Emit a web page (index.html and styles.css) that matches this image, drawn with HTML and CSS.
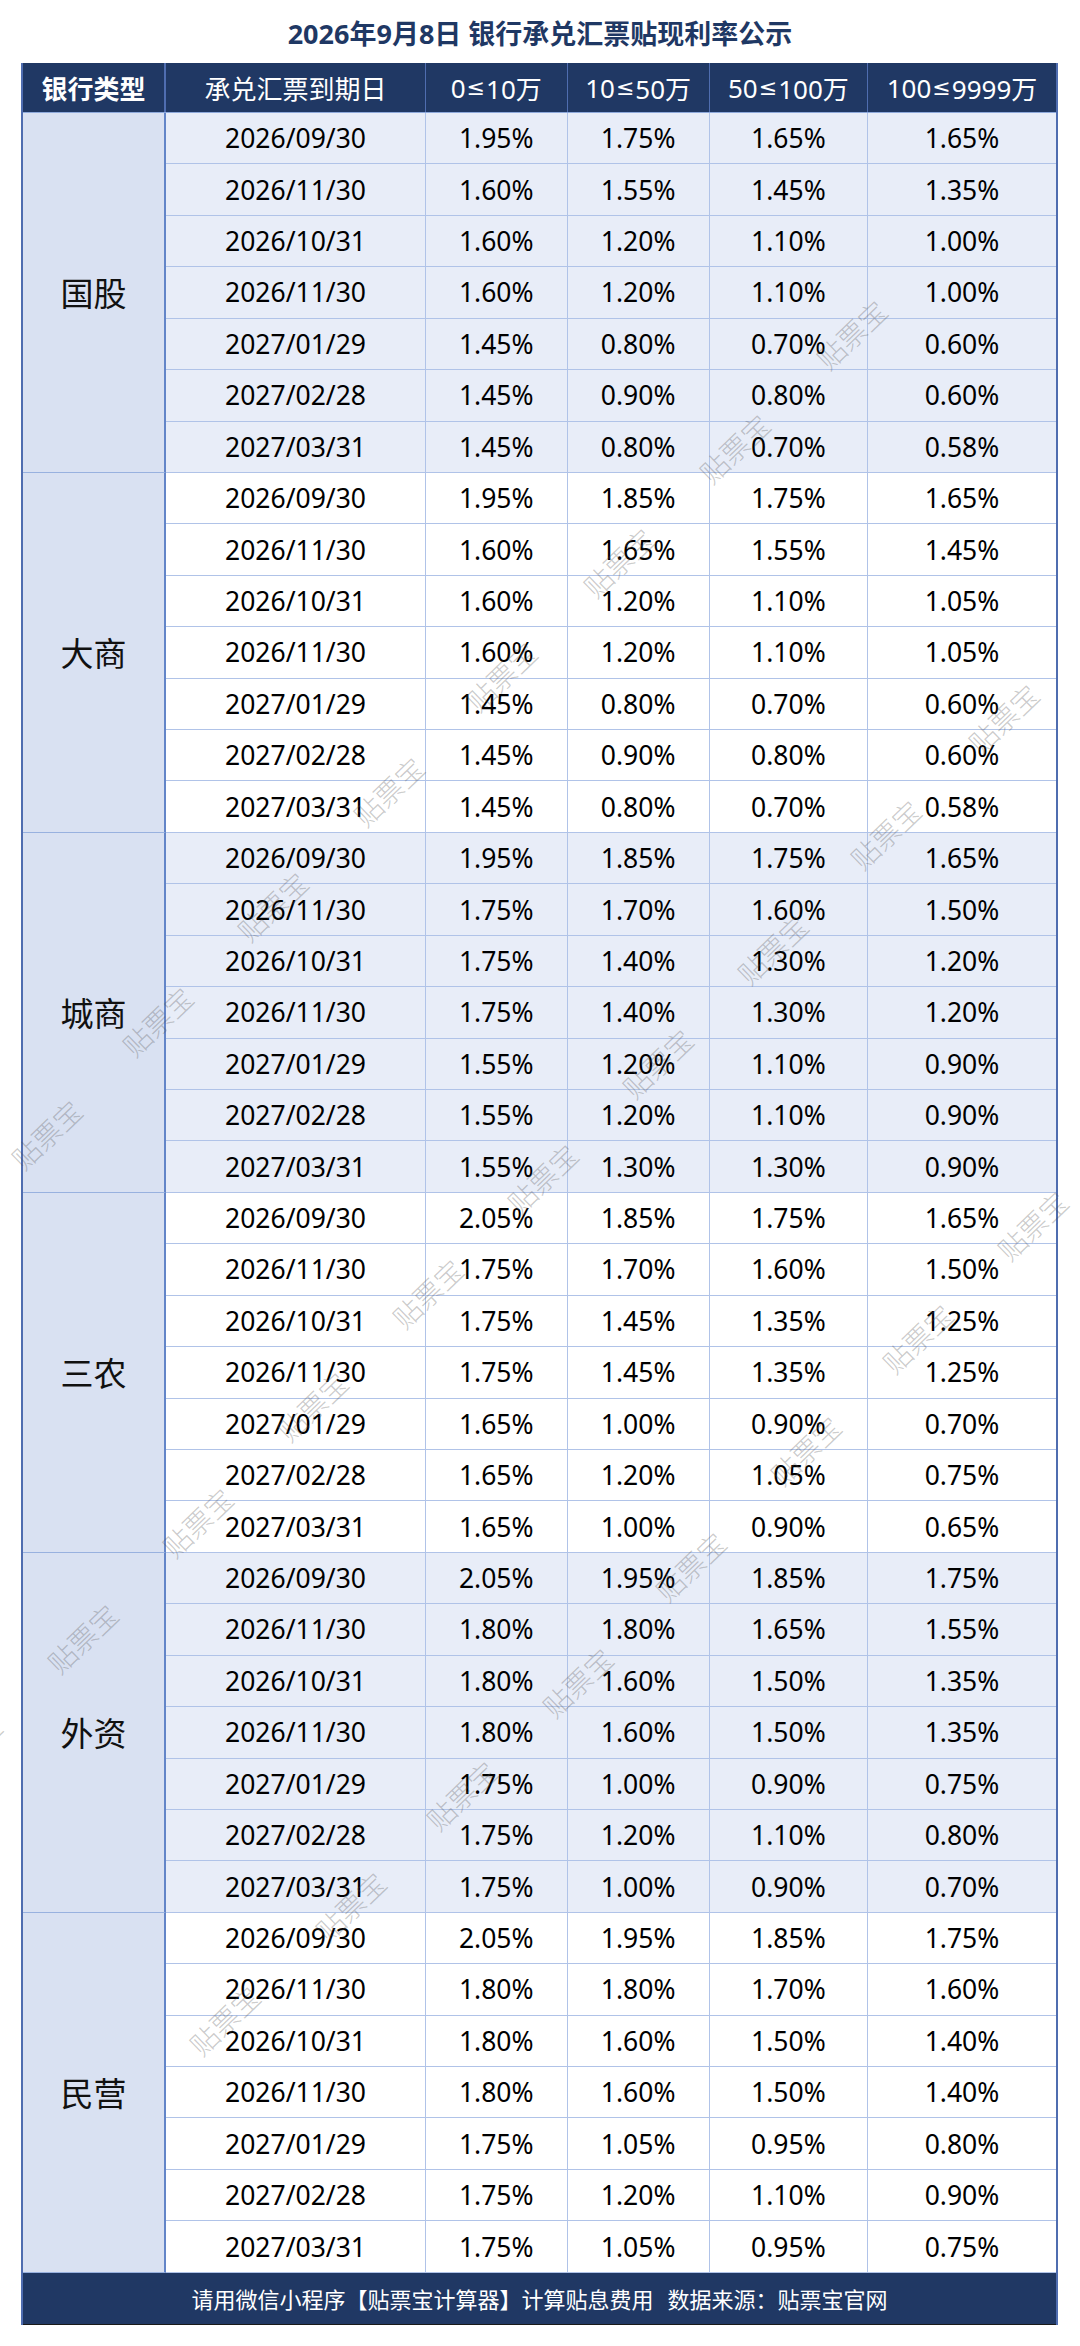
FILE: index.html
```html
<!DOCTYPE html>
<html lang="zh-CN">
<head>
<meta charset="utf-8">
<title>银行承兑汇票贴现利率公示</title>
<link rel="stylesheet" href="styles.css">
</head>
<body>
<div class="page">
  <h1 class="title">2026年9月8日 银行承兑汇票贴现利率公示</h1>
  <div class="sheet">
    <div class="head">
      <div class="h h-bold">银行类型</div>
      <div class="h">承兑汇票到期日</div>
      <div class="h">0<span class="le">≤</span>10万</div>
      <div class="h">10<span class="le">≤</span>50万</div>
      <div class="h">50<span class="le">≤</span>100万</div>
      <div class="h">100<span class="le">≤</span>9999万</div>
    </div>

    <div class="group alt">
      <div class="label">国股</div>
      <div class="v">2026/09/30</div><div class="v">1.95%</div><div class="v">1.75%</div><div class="v">1.65%</div><div class="v">1.65%</div>
      <div class="v">2026/11/30</div><div class="v">1.60%</div><div class="v">1.55%</div><div class="v">1.45%</div><div class="v">1.35%</div>
      <div class="v">2026/10/31</div><div class="v">1.60%</div><div class="v">1.20%</div><div class="v">1.10%</div><div class="v">1.00%</div>
      <div class="v">2026/11/30</div><div class="v">1.60%</div><div class="v">1.20%</div><div class="v">1.10%</div><div class="v">1.00%</div>
      <div class="v">2027/01/29</div><div class="v">1.45%</div><div class="v">0.80%</div><div class="v">0.70%</div><div class="v">0.60%</div>
      <div class="v">2027/02/28</div><div class="v">1.45%</div><div class="v">0.90%</div><div class="v">0.80%</div><div class="v">0.60%</div>
      <div class="v">2027/03/31</div><div class="v">1.45%</div><div class="v">0.80%</div><div class="v">0.70%</div><div class="v">0.58%</div>
    </div>

    <div class="group">
      <div class="label">大商</div>
      <div class="v">2026/09/30</div><div class="v">1.95%</div><div class="v">1.85%</div><div class="v">1.75%</div><div class="v">1.65%</div>
      <div class="v">2026/11/30</div><div class="v">1.60%</div><div class="v">1.65%</div><div class="v">1.55%</div><div class="v">1.45%</div>
      <div class="v">2026/10/31</div><div class="v">1.60%</div><div class="v">1.20%</div><div class="v">1.10%</div><div class="v">1.05%</div>
      <div class="v">2026/11/30</div><div class="v">1.60%</div><div class="v">1.20%</div><div class="v">1.10%</div><div class="v">1.05%</div>
      <div class="v">2027/01/29</div><div class="v">1.45%</div><div class="v">0.80%</div><div class="v">0.70%</div><div class="v">0.60%</div>
      <div class="v">2027/02/28</div><div class="v">1.45%</div><div class="v">0.90%</div><div class="v">0.80%</div><div class="v">0.60%</div>
      <div class="v">2027/03/31</div><div class="v">1.45%</div><div class="v">0.80%</div><div class="v">0.70%</div><div class="v">0.58%</div>
    </div>

    <div class="group alt">
      <div class="label">城商</div>
      <div class="v">2026/09/30</div><div class="v">1.95%</div><div class="v">1.85%</div><div class="v">1.75%</div><div class="v">1.65%</div>
      <div class="v">2026/11/30</div><div class="v">1.75%</div><div class="v">1.70%</div><div class="v">1.60%</div><div class="v">1.50%</div>
      <div class="v">2026/10/31</div><div class="v">1.75%</div><div class="v">1.40%</div><div class="v">1.30%</div><div class="v">1.20%</div>
      <div class="v">2026/11/30</div><div class="v">1.75%</div><div class="v">1.40%</div><div class="v">1.30%</div><div class="v">1.20%</div>
      <div class="v">2027/01/29</div><div class="v">1.55%</div><div class="v">1.20%</div><div class="v">1.10%</div><div class="v">0.90%</div>
      <div class="v">2027/02/28</div><div class="v">1.55%</div><div class="v">1.20%</div><div class="v">1.10%</div><div class="v">0.90%</div>
      <div class="v">2027/03/31</div><div class="v">1.55%</div><div class="v">1.30%</div><div class="v">1.30%</div><div class="v">0.90%</div>
    </div>

    <div class="group">
      <div class="label">三农</div>
      <div class="v">2026/09/30</div><div class="v">2.05%</div><div class="v">1.85%</div><div class="v">1.75%</div><div class="v">1.65%</div>
      <div class="v">2026/11/30</div><div class="v">1.75%</div><div class="v">1.70%</div><div class="v">1.60%</div><div class="v">1.50%</div>
      <div class="v">2026/10/31</div><div class="v">1.75%</div><div class="v">1.45%</div><div class="v">1.35%</div><div class="v">1.25%</div>
      <div class="v">2026/11/30</div><div class="v">1.75%</div><div class="v">1.45%</div><div class="v">1.35%</div><div class="v">1.25%</div>
      <div class="v">2027/01/29</div><div class="v">1.65%</div><div class="v">1.00%</div><div class="v">0.90%</div><div class="v">0.70%</div>
      <div class="v">2027/02/28</div><div class="v">1.65%</div><div class="v">1.20%</div><div class="v">1.05%</div><div class="v">0.75%</div>
      <div class="v">2027/03/31</div><div class="v">1.65%</div><div class="v">1.00%</div><div class="v">0.90%</div><div class="v">0.65%</div>
    </div>

    <div class="group alt">
      <div class="label">外资</div>
      <div class="v">2026/09/30</div><div class="v">2.05%</div><div class="v">1.95%</div><div class="v">1.85%</div><div class="v">1.75%</div>
      <div class="v">2026/11/30</div><div class="v">1.80%</div><div class="v">1.80%</div><div class="v">1.65%</div><div class="v">1.55%</div>
      <div class="v">2026/10/31</div><div class="v">1.80%</div><div class="v">1.60%</div><div class="v">1.50%</div><div class="v">1.35%</div>
      <div class="v">2026/11/30</div><div class="v">1.80%</div><div class="v">1.60%</div><div class="v">1.50%</div><div class="v">1.35%</div>
      <div class="v">2027/01/29</div><div class="v">1.75%</div><div class="v">1.00%</div><div class="v">0.90%</div><div class="v">0.75%</div>
      <div class="v">2027/02/28</div><div class="v">1.75%</div><div class="v">1.20%</div><div class="v">1.10%</div><div class="v">0.80%</div>
      <div class="v">2027/03/31</div><div class="v">1.75%</div><div class="v">1.00%</div><div class="v">0.90%</div><div class="v">0.70%</div>
    </div>

    <div class="group">
      <div class="label">民营</div>
      <div class="v">2026/09/30</div><div class="v">2.05%</div><div class="v">1.95%</div><div class="v">1.85%</div><div class="v">1.75%</div>
      <div class="v">2026/11/30</div><div class="v">1.80%</div><div class="v">1.80%</div><div class="v">1.70%</div><div class="v">1.60%</div>
      <div class="v">2026/10/31</div><div class="v">1.80%</div><div class="v">1.60%</div><div class="v">1.50%</div><div class="v">1.40%</div>
      <div class="v">2026/11/30</div><div class="v">1.80%</div><div class="v">1.60%</div><div class="v">1.50%</div><div class="v">1.40%</div>
      <div class="v">2027/01/29</div><div class="v">1.75%</div><div class="v">1.05%</div><div class="v">0.95%</div><div class="v">0.80%</div>
      <div class="v">2027/02/28</div><div class="v">1.75%</div><div class="v">1.20%</div><div class="v">1.10%</div><div class="v">0.90%</div>
      <div class="v">2027/03/31</div><div class="v">1.75%</div><div class="v">1.05%</div><div class="v">0.95%</div><div class="v">0.75%</div>
    </div>

    <div class="foot">请用微信小程序【贴票宝计算器】计算贴息费用<span class="gap">数据来源：贴票宝官网</span></div>
  </div>

  <div class="wm-layer" aria-hidden="true">
    <span class="wm" style="left:851px;top:334px">贴票宝</span>
    <span class="wm" style="left:734px;top:448px">贴票宝</span>
    <span class="wm" style="left:618px;top:562px">贴票宝</span>
    <span class="wm" style="left:501px;top:676px">贴票宝</span>
    <span class="wm" style="left:388px;top:791px">贴票宝</span>
    <span class="wm" style="left:272px;top:906px">贴票宝</span>
    <span class="wm" style="left:157px;top:1021px">贴票宝</span>
    <span class="wm" style="left:46px;top:1134px">贴票宝</span>

    <span class="wm" style="left:1003px;top:718px">贴票宝</span>
    <span class="wm" style="left:885px;top:834px">贴票宝</span>
    <span class="wm" style="left:772px;top:949px">贴票宝</span>
    <span class="wm" style="left:657px;top:1063px">贴票宝</span>
    <span class="wm" style="left:542px;top:1178px">贴票宝</span>
    <span class="wm" style="left:427px;top:1293px">贴票宝</span>
    <span class="wm" style="left:312px;top:1406px">贴票宝</span>
    <span class="wm" style="left:197px;top:1522px">贴票宝</span>
    <span class="wm" style="left:82px;top:1638px">贴票宝</span>
    <span class="wm" style="left:-34px;top:1750px">贴票宝</span>

    <span class="wm" style="left:1032px;top:1225px">贴票宝</span>
    <span class="wm" style="left:917px;top:1338px">贴票宝</span>
    <span class="wm" style="left:805px;top:1450px">贴票宝</span>
    <span class="wm" style="left:690px;top:1566px">贴票宝</span>
    <span class="wm" style="left:577px;top:1682px">贴票宝</span>
    <span class="wm" style="left:461px;top:1795px">贴票宝</span>
    <span class="wm" style="left:350px;top:1906px">贴票宝</span>
    <span class="wm" style="left:224px;top:2020px">贴票宝</span>
  </div>
</div>
</body>
</html>
```

FILE: styles.css
```css
* {
  box-sizing: border-box;
}

html, body {
  margin: 0;
  padding: 0;
  background: #ffffff;
}

body {
  font-family: "Noto Sans", "Noto Sans CJK SC", sans-serif;
  color: #000;
}

.page {
  position: relative;
  width: 1080px;
  min-height: 2346px;
  overflow: hidden;
}

.title {
  margin: 0;
  height: 63px;
  padding-top: 4px;
  line-height: 59px;
  text-align: center;
  font-size: 27px;
  font-weight: 700;
  color: #1f3864;
  letter-spacing: 0;
}

.sheet {
  margin-left: 21px;
  width: 1037px;
  border-left: 2px solid #4f6db0;
  border-right: 2px solid #4f6db0;
}

.head,
.group {
  display: grid;
  grid-template-columns: 143px 260px 141.5px 142.3px 158.2px 188px;
}

.head {
  height: 50px;
  background: #203864;
  border-bottom: 1px solid #8ea9db;
}

.h {
  display: flex;
  align-items: center;
  justify-content: center;
  color: #fff;
  font-size: 26px;
  border-right: 1px solid #4f6db0;
}

.h:last-child {
  border-right: none;
}

.h-bold {
  font-weight: 700;
  border-right: 2px solid #4f6db0;
}

.le {
  font-family: "DejaVu Sans", "Noto Sans", sans-serif;
  font-size: 22px;
  margin: 0 1px;
}

.group {
  grid-template-rows: repeat(7, 51.43px);
  background: #ffffff;
}

.group.alt {
  background: #e8edf8;
}

.label {
  grid-column: 1;
  grid-row: 1 / span 7;
  display: flex;
  align-items: center;
  justify-content: center;
  background: #d9e1f2;
  font-size: 33px;
  color: #111;
  border-right: 2px solid #6385c8;
  border-bottom: 1px solid #98b1df;
}

.v {
  display: flex;
  align-items: center;
  justify-content: center;
  font-size: 26.5px;
  color: #000;
  border-right: 1px solid #b0c3e8;
  border-bottom: 1px solid #b0c3e8;
}

.v:nth-child(5n+1) {
  border-right: none;
}

.foot {
  height: 52px;
  display: flex;
  align-items: center;
  justify-content: center;
  background: #203864;
  color: #fff;
  font-size: 22px;
  border-bottom: 1px solid #1a1a1a;
}

.gap {
  margin-left: 14px;
}

.wm-layer {
  position: absolute;
  inset: 0;
  pointer-events: none;
}

.wm {
  position: absolute;
  transform: translate(-50%, -50%) rotate(-44deg);
  font-family: "Noto Sans CJK SC", sans-serif;
  font-weight: 300;
  font-size: 28px;
  color: rgba(80, 80, 80, 0.3);
  white-space: nowrap;
  line-height: 1;
}
```
